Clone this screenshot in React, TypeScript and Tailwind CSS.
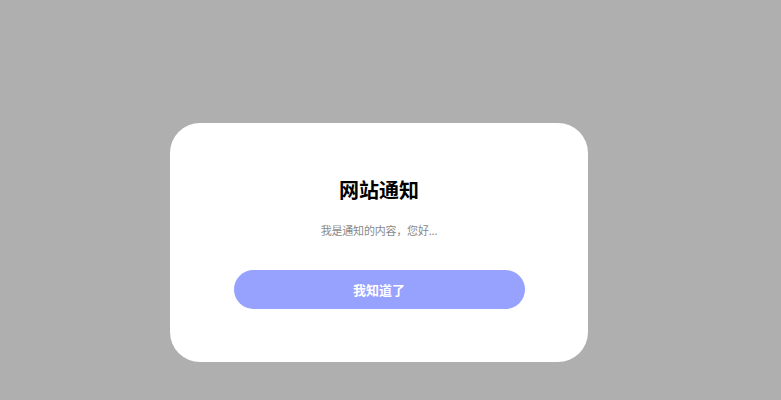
import React from "react";

export default function App() {
  return (
    <div
      className="w-[781px] h-[400px] bg-[#afafaf] pt-[123px] pl-[170px]"
      style={{ fontFamily: '"Noto Sans CJK SC", "Noto Sans", sans-serif' }}
    >
      <div className="w-[418px] h-[239px] bg-white rounded-[30px] flex flex-col items-center pt-[52px]">
        <div className="text-[20px] leading-[30px] font-bold text-black">网站通知</div>
        <div className="mt-[16px] text-[11px] leading-[18px] text-[#8a8a8a] tracking-[-0.2px]">我是通知的内容，您好...</div>
        <button className="mt-[31px] w-[291px] h-[39px] rounded-full bg-[#97a1fe] text-white text-[13px] font-bold">
          我知道了
        </button>
      </div>
    </div>
  );
}
